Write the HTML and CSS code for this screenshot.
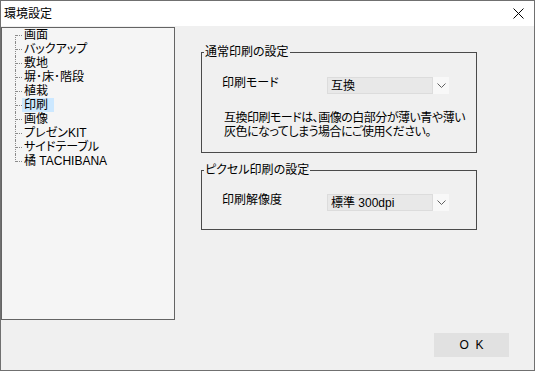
FILE: index.html
```html
<!DOCTYPE html>
<html lang="ja">
<head>
<meta charset="utf-8">
<title>環境設定</title>
<link rel="stylesheet" href="styles.css">
</head>
<body>
<div class="window">
  <div class="titlebar">
    <span class="title">環境設定</span>
    <svg class="close" width="11" height="11" viewBox="0 0 11 11"><path d="M0.5 0.5 L10.5 10.5 M10.5 0.5 L0.5 10.5" stroke="#000" stroke-width="1" fill="none"/></svg>
  </div>
  <div class="content">
    <div class="main">
      <ul class="tree">
        <li><span class="lbl">画面</span></li>
        <li><span class="lbl">バックアップ</span></li>
        <li><span class="lbl">敷地</span></li>
        <li><span class="lbl">塀･床･階段</span></li>
        <li><span class="lbl">植栽</span></li>
        <li><span class="lbl selected">印刷</span></li>
        <li><span class="lbl">画像</span></li>
        <li><span class="lbl">プレゼンKIT</span></li>
        <li><span class="lbl">サイドテーブル</span></li>
        <li><span class="lbl">橘 TACHIBANA</span></li>
      </ul>
      <div class="panel">
        <fieldset class="group g1">
          <legend>通常印刷の設定</legend>
          <div class="row">
            <span class="label">印刷モード</span>
            <div class="select"><span class="value">互換</span><span class="arrow"><svg width="9" height="6" viewBox="0 0 9 6"><path d="M0.5 0.5 L4.5 4.5 L8.5 0.5" stroke="#606060" stroke-width="1" fill="none"/></svg></span></div>
          </div>
          <p class="desc">互換印刷モードは、画像の白部分が薄い青や薄い<br>灰色になってしまう場合にご使用ください。</p>
        </fieldset>
        <fieldset class="group g2">
          <legend>ピクセル印刷の設定</legend>
          <div class="row">
            <span class="label">印刷解像度</span>
            <div class="select"><span class="value">標準 300dpi</span><span class="arrow"><svg width="9" height="6" viewBox="0 0 9 6"><path d="M0.5 0.5 L4.5 4.5 L8.5 0.5" stroke="#606060" stroke-width="1" fill="none"/></svg></span></div>
          </div>
        </fieldset>
      </div>
    </div>
    <div class="footer">
      <button class="btn">O&nbsp;&nbsp;K</button>
    </div>
  </div>
</div>
</body>
</html>
```
FILE: styles.css
```css
* { box-sizing: border-box; }
html, body { margin: 0; padding: 0; }
body {
  font-family: "Liberation Sans", "Noto Sans CJK JP", sans-serif;
  font-size: 12px;
  font-feature-settings: "palt";
  color: #000;
  background: #f0f0f0;
}
.window {
  width: 535px;
  height: 371px;
  border: 1px solid #707070;
  display: flex;
  flex-direction: column;
  background: #f0f0f0;
}
.titlebar {
  height: 25px;
  background: #fff;
  display: flex;
  align-items: center;
  justify-content: space-between;
  padding: 0 10px 0 3px;
}
.title { line-height: 14px; }
.close { display: block; }
.content {
  flex: 1;
  display: flex;
  flex-direction: column;
}
.main {
  display: flex;
  align-items: flex-start;
}
.tree {
  list-style: none;
  margin: 1px 0 0 0;
  padding: 0 0 0 20px;
  width: 174px;
  height: 293px;
  border: 1px solid #646464;
  background: #f5f5f5;
}
.tree li {
  position: relative;
  height: 14px;
  line-height: 14px;
  white-space: nowrap;
}
.tree li::before {
  content: "";
  position: absolute;
  left: -7px;
  top: 0;
  height: 14px;
  border-left: 1px dotted #8a8a8a;
}
.tree li:first-child::before { top: 7px; height: 7px; }
.tree li:last-child::before { height: 8px; }
.tree li::after {
  content: "";
  position: absolute;
  left: -6px;
  top: 7px;
  width: 6px;
  border-top: 1px dotted #8a8a8a;
}
.lbl {
  display: inline-block;
  height: 14px;
  padding: 0 3px 0 2px;
}
.lbl.selected { background: #cce8ff; padding-right: 6px; }
.panel {
  padding: 19px 0 0 26px;
}
.group {
  margin: 0;
  padding: 0 0 0 20px;
  width: 276px;
  border: 1px solid #4a4a4a;
  min-width: 0;
}
.group legend {
  padding: 0 1px;
  margin-left: -18px;
  line-height: 14px;
  height: 14px;
}
.g1 { padding-bottom: 13px; }
.g2 { margin-top: 10px; padding-bottom: 18px; }
.row {
  display: flex;
  align-items: flex-start;
  margin-top: 18px;
}
.g2 .row { margin-top: 17px; }
.label {
  width: 105px;
  line-height: 14px;
  margin-top: -1px;
}
.select {
  display: flex;
  width: 122px;
  height: 17px;
}
.value {
  width: 106px;
  height: 17px;
  line-height: 17px;
  padding-left: 3px;
  background: #e8e8e8;
  border: 1px solid #dcdcdc;
}
.arrow {
  width: 16px;
  height: 17px;
  background: #f8f8f8;
  display: flex;
  align-items: center;
  justify-content: center;
}
.arrow svg { display: block; }
.desc {
  margin: 17px 0 0 2px;
  line-height: 14px;
  letter-spacing: -0.5px;
  white-space: nowrap;
}
.footer {
  display: flex;
  justify-content: flex-end;
  padding: 13px 25px 0 0;
}
.btn {
  width: 75px;
  height: 24px;
  border: none;
  background: #e1e1e1;
  font: inherit;
  line-height: 14px;
  padding: 0;
  color: #000;
}
```
